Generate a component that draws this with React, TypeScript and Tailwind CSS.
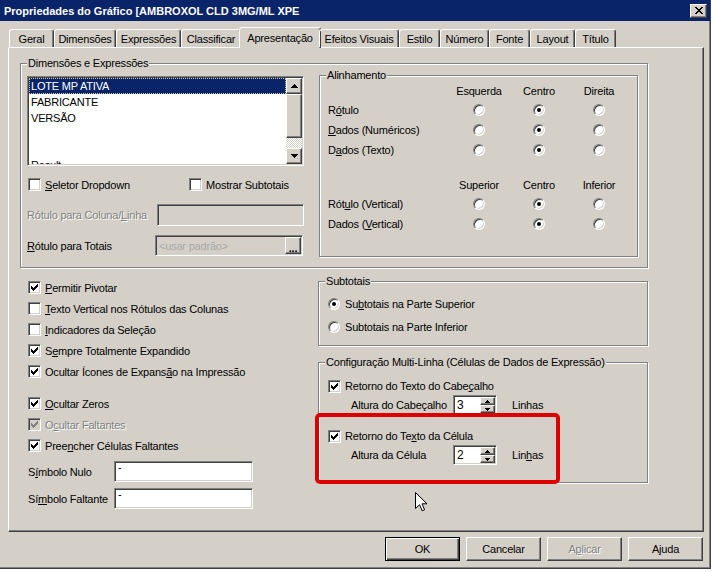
import React from "react";

const sunken =
  "border border-t-[#808080] border-l-[#808080] border-r-white border-b-white shadow-[inset_1px_1px_0_#404040,inset_-1px_-1px_0_#d4d0c8]";
const raised =
  "border border-t-white border-l-white border-r-[#404040] border-b-[#404040] shadow-[inset_-1px_-1px_0_#808080]";
const dis = "text-[#808080] [text-shadow:1px_1px_0_#fff]";

function U({ children }: { children: React.ReactNode }) {
  return <span className="underline underline-offset-[1px]">{children}</span>;
}

function Check({ checked, disabled }: { checked?: boolean; disabled?: boolean }) {
  return (
    <span
      className={`relative inline-block w-[13px] h-[13px] shrink-0 ${sunken} ${
        disabled ? "bg-[#d4d0c8]" : "bg-white"
      }`}
    >
      {checked && (
        <svg
          width="7"
          height="7"
          viewBox="0 0 7 7"
          className="absolute left-[2px] top-[2px]"
          shapeRendering="crispEdges"
          fill={disabled ? "#808080" : "#000"}
        >
          <path d="M6 0h1v1H6z M5 1h2v1H5z M0 2h1v1H0z M4 2h3v1H4z M0 3h2v1H0z M3 3h3v1H3z M0 4h5v1H0z M1 5h3v1H1z M2 6h1v1H2z" />
        </svg>
      )}
    </span>
  );
}

function Radio({ on }: { on?: boolean }) {
  return (
    <span className="relative inline-block w-[12px] h-[12px] shrink-0 rounded-full bg-white border border-t-[#808080] border-l-[#808080] border-r-white border-b-white shadow-[inset_1px_1px_0_#404040,inset_-1px_-1px_0_#d4d0c8]">
      {on && <span className="absolute left-[3px] top-[3px] w-[4px] h-[4px] rounded-full bg-black" />}
    </span>
  );
}

function Group({
  label,
  className,
  children,
}: {
  label: React.ReactNode;
  className?: string;
  children?: React.ReactNode;
}) {
  return (
    <div className={`relative border border-[#808080] shadow-[inset_1px_1px_0_#fff,1px_1px_0_#fff] ${className ?? ""}`}>
      <span className="absolute left-[6px] -top-[8px] bg-[#d4d0c8] px-[1px] leading-[14px] whitespace-nowrap">
        {label}
      </span>
      {children}
    </div>
  );
}

function Arrow({ up }: { up?: boolean }) {
  return (
    <svg width="7" height="4" viewBox="0 0 7 4" shapeRendering="crispEdges">
      {up ? <path d="M3 0h1v1h1v1h1v1h1v1H0V3h1V2h1V1h1z" /> : <path d="M0 0h7v1H6v1H5v1H4v1H3V3H2V2H1V1H0z" />}
    </svg>
  );
}

function Spin({ value }: { value: string }) {
  return (
    <div className={`flex w-[44px] h-[20px] bg-white ${sunken}`}>
      <span className="flex-1 pl-[3px] pt-[2px] leading-[14px] text-[12px]">{value}</span>
      <div className="flex flex-col w-[16px] p-[1px] pl-0">
        <div className={`flex-1 flex items-center justify-center bg-[#d4d0c8] ${raised}`}>
          <svg width="5" height="3" viewBox="0 0 5 3" shapeRendering="crispEdges">
            <path d="M2 0h1v1h1v1h1v1H0V2h1V1h1z" />
          </svg>
        </div>
        <div className={`flex-1 flex items-center justify-center bg-[#d4d0c8] ${raised}`}>
          <svg width="5" height="3" viewBox="0 0 5 3" shapeRendering="crispEdges">
            <path d="M0 0h5v1H4v1H3v1H2V2H1V1H0z" />
          </svg>
        </div>
      </div>
    </div>
  );
}

function AlignRow({ label, sel }: { label: React.ReactNode; sel: number }) {
  return (
    <div className="flex items-center h-[20px]">
      <span className="w-[121px]">{label}</span>
      {[0, 1, 2].map((i) => (
        <span key={i} className="w-[60px] flex justify-center">
          <Radio on={i === sel} />
        </span>
      ))}
    </div>
  );
}

function AlignHead({ cols }: { cols: string[] }) {
  return (
    <div className="flex items-center h-[19px]">
      <span className="w-[121px]" />
      {cols.map((c) => (
        <span key={c} className="w-[60px] text-center">
          {c}
        </span>
      ))}
    </div>
  );
}

function CheckRow({
  checked,
  disabled,
  children,
  className,
}: {
  checked?: boolean;
  disabled?: boolean;
  children: React.ReactNode;
  className?: string;
}) {
  return (
    <div className={`flex items-center gap-[4px] h-[21px] ${className ?? ""}`}>
      <Check checked={checked} disabled={disabled} />
      <span className={disabled ? dis : ""}>{children}</span>
    </div>
  );
}

const tabs: { name: React.ReactNode; w: string; active?: boolean }[] = [
  { name: "Geral", w: "w-[45px]" },
  { name: "Dimensões", w: "w-[62px]" },
  { name: "Expressões", w: "w-[65px]" },
  { name: "Classificar", w: "w-[60px]" },
  { name: "Apresentação", w: "w-[82px]", active: true },
  { name: "Efeitos Visuais", w: "w-[80px]" },
  { name: "Estilo", w: "w-[41px]" },
  { name: "Número", w: "w-[49px]" },
  { name: "Fonte", w: "w-[41px]" },
  { name: "Layout", w: "w-[45px]" },
  { name: "Título", w: "w-[41px]" },
];

export default function App() {
  return (
    <div className="relative w-[713px] h-[572px] overflow-hidden bg-white font-['Liberation_Sans',Arial,sans-serif] text-[11px] leading-[14px] tracking-[-0.2px] text-black">
      <div className="flex flex-col w-[711px] h-[569px] bg-[#d4d0c8] border-r border-b border-r-[#404040] border-b-[#404040] shadow-[inset_-1px_-1px_0_#808080]">
        {/* title bar */}
        <div className="flex items-center justify-between h-[21px] bg-[#0a246a] pl-[4px] pr-[3px]">
          <span className="font-bold text-white tracking-normal">Propriedades do Gráfico [AMBROXOL CLD 3MG/ML XPE</span>
          <div className={`flex items-center justify-center w-[17px] h-[14px] bg-[#d4d0c8] ${raised}`}>
            <svg width="8" height="7" viewBox="0 0 8 7" shapeRendering="crispEdges">
              <path d="M0 0h2v1h1v1h2V1h1V0h2v1H7v1H6v1H5v1h1v1h1v1h1v1H6V6H5V5H3v1H2v1H0V6h1V5h1V4h1V3H2V2H1V1H0z" />
            </svg>
          </div>
        </div>

        {/* tabs */}
        <div className="relative z-10 flex items-end h-[26px] pl-[9px]">
          {tabs.map((t, i) =>
            t.active ? (
              <div
                key={i}
                className={`${t.w} -mx-[2px] -mb-[1px] h-[21px] bg-[#d4d0c8] border-t border-l border-r border-t-white border-l-white border-r-[#404040] rounded-t-[3px] shadow-[inset_-1px_0_0_#808080] text-center pt-[3px]`}
              >
                {t.name}
              </div>
            ) : (
              <div
                key={i}
                className={`${t.w} h-[18px] border-t border-l border-r border-t-white border-l-white border-r-[#404040] rounded-t-[3px] shadow-[inset_-1px_0_0_#808080] text-center pt-[2px]`}
              >
                {t.name}
              </div>
            )
          )}
        </div>

        {/* tab panel */}
        <div className="ml-[8px] w-[696px] h-[485px] border border-t-white border-l-white border-r-[#404040] border-b-[#404040] shadow-[inset_-1px_-1px_0_#808080]">
          <Group label="Dimensões e Expressões" className="mt-[15px] ml-[11px] w-[628px] h-[205px] flex items-start pl-[6px] pt-[12px] gap-[15px]">
            {/* left column */}
            <div className="w-[277px] flex flex-col">
              <div className={`flex w-[277px] h-[90px] bg-white p-[1px] overflow-hidden ${sunken}`}>
                <div className="flex-1 flex flex-col overflow-hidden">
                  <div className="h-[16px] leading-[16px] pl-[2px] bg-[#0a246a] text-white outline outline-1 outline-dotted outline-[#c8c8a0] -outline-offset-1">
                    LOTE MP ATIVA
                  </div>
                  <div className="h-[16px] leading-[16px] pl-[2px] shrink-0">FABRICANTE</div>
                  <div className="h-[16px] leading-[16px] pl-[2px] shrink-0">VERSÃO</div>
                  <div className="h-[16px] shrink-0" />
                  <div className="h-[15px] shrink-0" />
                  <div className="h-[16px] leading-[16px] pl-[2px] shrink-0">Result</div>
                </div>
                <div className="w-[16px] flex flex-col">
                  <div className={`h-[16px] flex items-center justify-center bg-[#d4d0c8] ${raised}`}>
                    <Arrow up />
                  </div>
                  <div className={`h-[44px] bg-[#d4d0c8] ${raised}`} />
                  <div className="flex-1 bg-[repeating-conic-gradient(#ffffff_0%_25%,#d4d0c8_0%_50%)] bg-[length:2px_2px]" />
                  <div className={`h-[16px] flex items-center justify-center bg-[#d4d0c8] ${raised}`}>
                    <Arrow />
                  </div>
                </div>
              </div>

              <div className="flex items-center h-[17px] mt-[10px]">
                <div className="flex items-center gap-[4px] w-[162px] pl-[1px]">
                  <Check />
                  <span>
                    <U>S</U>eletor Dropdown
                  </span>
                </div>
                <div className="flex items-center gap-[4px]">
                  <Check />
                  <span>Mostrar Subtotais</span>
                </div>
              </div>

              <div className="flex items-center h-[22px] mt-[11px]">
                <span className={`w-[130px] ${dis}`}>
                  Rótulo para Coluna/<U>L</U>inha
                </span>
                <div className={`w-[147px] h-[22px] bg-[#d4d0c8] ${sunken}`} />
              </div>

              <div className="flex items-center h-[21px] mt-[9px]">
                <span className="w-[128px]">
                  <U>R</U>ótulo para Totais
                </span>
                <div className={`flex items-center justify-between w-[148px] h-[21px] bg-[#d4d0c8] ${sunken}`}>
                  <span className="pl-[3px] text-[#a8a8a8]">&lt;usar padrão&gt;</span>
                  <div className={`w-[16px] h-[17px] mr-[1px] flex items-end justify-center pb-[1px] bg-[#d4d0c8] ${raised}`}>
                    <span className="font-bold leading-[8px]">...</span>
                  </div>
                </div>
              </div>
            </div>

            {/* Alinhamento */}
            <Group label="Alinhamento" className="-mt-[1px] w-[319px] h-[182px] pl-[8px] pt-[5px]">
              <AlignHead cols={["Esquerda", "Centro", "Direita"]} />
              <AlignRow label={<>R<U>ó</U>tulo</>} sel={1} />
              <AlignRow label={<><U>D</U>ados (Numéricos)</>} sel={1} />
              <AlignRow label={<>D<U>a</U>dos (Texto)</>} sel={1} />
              <div className="mt-[15px]">
                <AlignHead cols={["Superior", "Centro", "Inferior"]} />
              </div>
              <AlignRow label={<>Rót<U>u</U>lo (Vertical)</>} sel={1} />
              <AlignRow label={<>Dados (<U>V</U>ertical)</>} sel={1} />
            </Group>
          </Group>

          {/* lower area */}
          <div className="flex items-start">
            <div className="ml-[19px] w-[290px] mt-[9px] flex flex-col">
              <CheckRow checked>
                <U>P</U>ermitir Pivotar
              </CheckRow>
              <CheckRow>
                <U>T</U>exto Vertical nos Rótulos das Colunas
              </CheckRow>
              <CheckRow>
                <U>I</U>ndicadores da Seleção
              </CheckRow>
              <CheckRow checked>
                S<U>e</U>mpre Totalmente Expandido
              </CheckRow>
              <CheckRow checked>
                Ocultar Ícones de Expans<U>ã</U>o na Impressão
              </CheckRow>
              <CheckRow checked className="mt-[11px]">
                <U>O</U>cultar Zeros
              </CheckRow>
              <CheckRow checked disabled>
                O<U>c</U>ultar Faltantes
              </CheckRow>
              <CheckRow checked>
                Pree<U>n</U>cher Células Faltantes
              </CheckRow>
              <div className="flex items-center h-[21px] mt-[5px]">
                <span className="w-[86px]">
                  S<U>í</U>mbolo Nulo
                </span>
                <div className={`w-[139px] h-[21px] bg-white pl-[3px] leading-[10px] ${sunken}`}>-</div>
              </div>
              <div className="flex items-center h-[21px] mt-[6px]">
                <span className="w-[86px]">
                  Sí<U>m</U>bolo Faltante
                </span>
                <div className={`w-[139px] h-[21px] bg-white pl-[3px] leading-[10px] ${sunken}`}>-</div>
              </div>
            </div>

            <div className="w-[331px] mt-[13px] flex flex-col">
              <Group label="Subtotais" className="w-[330px] h-[65px] pl-[9px] pt-[10px]">
                <div className="flex items-center gap-[5px] h-[23px]">
                  <Radio on />
                  <span>
                    Su<U>b</U>totais na Parte Superior
                  </span>
                </div>
                <div className="flex items-center gap-[5px] h-[23px]">
                  <Radio />
                  <span>Subtotais na Parte Inferior</span>
                </div>
              </Group>

              <Group
                label="Configuração Multi-Linha (Células de Dados de Expressão)"
                className="mt-[16px] w-[330px] h-[121px] pt-[14px]"
              >
                <div className="flex items-center gap-[4px] h-[18px] pl-[9px]">
                  <Check checked />
                  <span>
                    Retorno do Texto do Cabe<U>ç</U>alho
                  </span>
                </div>
                <div className="flex items-center h-[20px] pl-[32px]">
                  <span className="w-[102px]">Altura do Cabeçalho</span>
                  <Spin value="3" />
                  <span className="ml-[15px]">Linhas</span>
                </div>
                <div className="flex items-center gap-[4px] h-[18px] pl-[9px] mt-[12px]">
                  <Check checked />
                  <span>
                    Retorno do Te<U>x</U>to da Célula
                  </span>
                </div>
                <div className="flex items-center h-[20px] pl-[32px]">
                  <span className="w-[102px]">Altura da Célula</span>
                  <Spin value="2" />
                  <span className="ml-[15px]">
                    Lin<U>h</U>as
                  </span>
                </div>
              </Group>
            </div>
          </div>
        </div>

        {/* buttons */}
        <div className="flex justify-end gap-[6px] pr-[7px] mt-[5px]">
          <button className="w-[75px] h-[24px] bg-[#d4d0c8] border border-black shadow-[inset_1px_1px_0_#fff,inset_-1px_-1px_0_#404040,inset_-2px_-2px_0_#808080]">
            OK
          </button>
          <button className={`w-[75px] h-[24px] bg-[#d4d0c8] ${raised}`}>Cancelar</button>
          <button className={`w-[75px] h-[24px] bg-[#d4d0c8] ${raised}`}>
            <span className={dis}>
              A<U>p</U>licar
            </span>
          </button>
          <button className={`w-[75px] h-[24px] bg-[#d4d0c8] ${raised}`}>Ajuda</button>
        </div>
      </div>

      {/* annotation overlay */}
      <div className="absolute left-[315px] top-[413px] w-[245px] h-[71px] border-[4px] border-[#dc0000] rounded-[5px]" />

      {/* mouse cursor */}
      <svg className="absolute left-[415px] top-[492px]" width="13" height="20" viewBox="0 0 13 20">
        <path d="M0.5 0.5 L0.5 16.5 L4.5 12.7 L7.2 18.8 L9.6 17.8 L7 11.8 L12 11.8 Z" fill="#fff" stroke="#000" strokeWidth="1" />
      </svg>
    </div>
  );
}
